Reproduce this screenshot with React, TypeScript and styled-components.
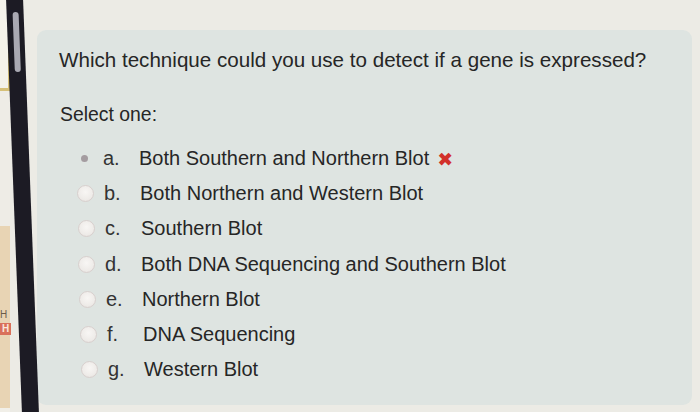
import React from "react";
import styled, { createGlobalStyle } from "styled-components";

const Global = createGlobalStyle`
  html, body { margin: 0; padding: 0; }
  body { width: 700px; height: 412px; overflow: hidden; background: #ecebe5; font-family: "Liberation Sans", Arial, sans-serif; }
`;

const Screen = styled.div`
  display: flex;
  width: 700px;
  height: 412px;
  overflow: hidden;
  background: #ecebe5;
`;

const SideStrip = styled.div`
  width: 10px;
  flex: none;
  display: flex;
  flex-direction: column;
  background: #f1efe8;
`;

const SideTop = styled.div`
  height: 88px;
  background: #f4f2ea;
  border-right: 2px solid #d6c078;
  border-bottom: 3px solid #d6c078;
`;

const SideGap = styled.div`
  height: 135px;
  background: #eeece6;
`;

const SideTab = styled.div`
  height: 172px;
  background: #e8d4b4;
  display: flex;
  flex-direction: column;
  align-items: flex-start;
  justify-content: center;
  gap: 3px;
  padding-top: 10px;
  font-size: 10px;
  color: #6a5b4a;
`;

const SideBadge = styled.span`
  background: #d9705a;
  color: #fbe8dc;
  font-size: 10px;
  font-weight: bold;
  padding: 0 2px;
  line-height: 12px;
`;

const Bezel = styled.div`
  width: 17px;
  flex: none;
  margin-left: 4px;
  background: #1c1b24;
  transform: skewX(2.2deg);
  display: flex;
  justify-content: center;
  padding-top: 12px;
  box-sizing: border-box;
`;

const Thumb = styled.div`
  width: 6px;
  height: 60px;
  border-radius: 3px;
  background: #a9a9b2;
`;

const Page = styled.div`
  flex: 1;
  padding: 30px 8px 7px 6px;
  box-sizing: border-box;
  display: flex;
`;

const Card = styled.div`
  flex: 1;
  background: #dee4e1;
  border-radius: 9px;
  padding: 16px 20px 0 22px;
  display: flex;
  flex-direction: column;
  color: #262626;
`;

const Question = styled.div`
  font-size: 20.6px;
  line-height: 28px;
`;

const Prompt = styled.div`
  margin-top: 29px;
  margin-left: 1px;
  font-size: 19.4px;
  line-height: 22px;
`;

const Options = styled.div`
  margin-top: 16px;
  display: flex;
  flex-direction: column;
`;

const Row = styled.div<{ $indent: number }>`
  display: flex;
  align-items: center;
  height: 35.2px;
  padding-left: ${(p) => p.$indent}px;
  font-size: 20px;
`;

const Radio = styled.span<{ $checked?: boolean }>`
  width: 17px;
  height: 17px;
  flex: none;
  border-radius: 50%;
  display: flex;
  align-items: center;
  justify-content: center;
  box-sizing: border-box;
  background: ${(p) => (p.$checked ? "transparent" : "radial-gradient(circle at 50% 40%, #f8f6f4 0%, #eeebe8 65%, #e0dad8 100%)")};
  border: ${(p) => (p.$checked ? "none" : "1px solid #d8d0ce")};
`;

const Dot = styled.span`
  width: 7px;
  height: 7px;
  border-radius: 50%;
  background: #a49ca0;
`;

const Letter = styled.span`
  width: 36px;
  margin-left: 10px;
  flex: none;
  color: #333;
`;

const Text = styled.span`
  color: #262626;
`;

const Cross = styled.span`
  color: #d2302a;
  font-size: 19px;
  margin-left: 8px;
  font-family: "DejaVu Sans", sans-serif;
`;

const options = [
  { l: "a.", t: "Both Southern and Northern Blot", checked: true, wrong: true },
  { l: "b.", t: "Both Northern and Western Blot" },
  { l: "c.", t: "Southern Blot" },
  { l: "d.", t: "Both DNA Sequencing and Southern Blot" },
  { l: "e.", t: "Northern Blot" },
  { l: "f.", t: "DNA Sequencing" },
  { l: "g.", t: "Western Blot" },
];

export default function App() {
  return (
    <>
      <Global />
      <Screen>
        <SideStrip>
          <SideTop />
          <SideGap />
          <SideTab>
            <span>H</span>
            <SideBadge>H</SideBadge>
          </SideTab>
        </SideStrip>
        <Bezel>
          <Thumb />
        </Bezel>
        <Page>
          <Card>
            <Question>Which technique could you use to detect if a gene is expressed?</Question>
            <Prompt>Select one:</Prompt>
            <Options>
              {options.map((o, i) => (
                <Row key={o.l} $indent={17 + Math.round(i * 0.8)}>
                  <Radio $checked={o.checked}>{o.checked && <Dot />}</Radio>
                  <Letter>{o.l}</Letter>
                  <Text>{o.t}</Text>
                  {o.wrong && <Cross>✖</Cross>}
                </Row>
              ))}
            </Options>
          </Card>
        </Page>
      </Screen>
    </>
  );
}
